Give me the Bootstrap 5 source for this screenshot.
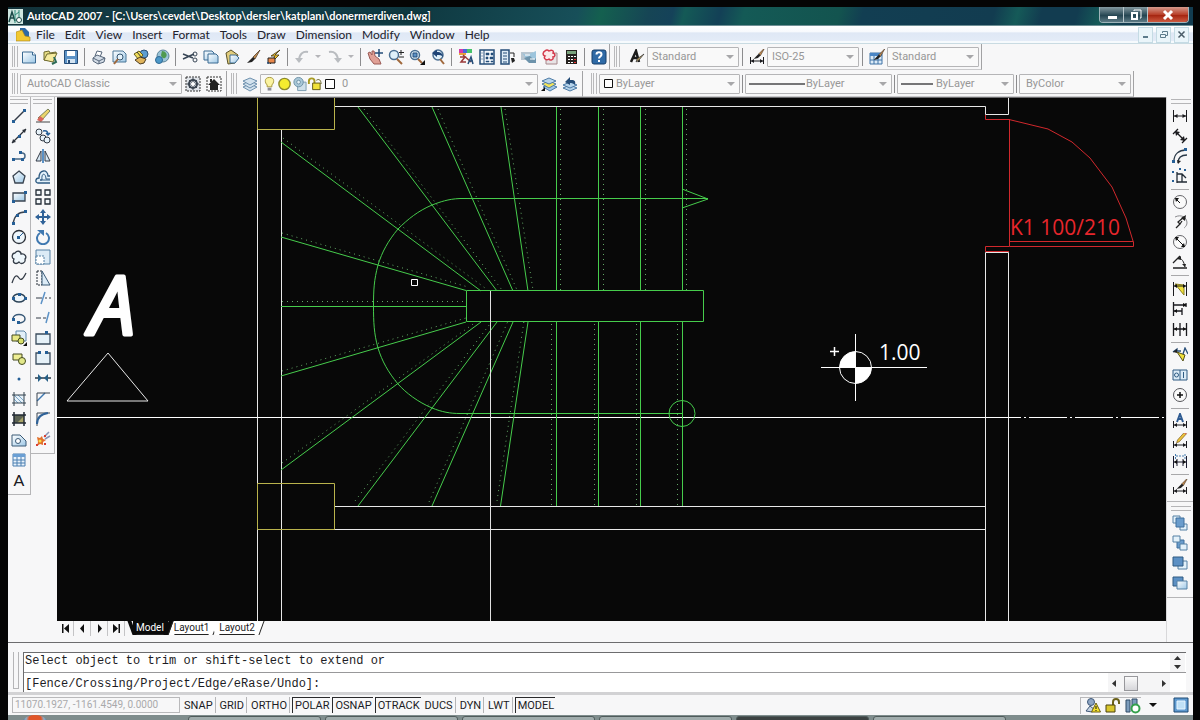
<!DOCTYPE html>
<html lang="en">
<head>
<meta charset="utf-8">
<meta name="viewport" content="width=device-width, initial-scale=1">
<title>AutoCAD 2007 - donermerdiven.dwg</title>
<link href="https://cdn.jsdelivr.net/npm/bootstrap@5.3.0/dist/css/bootstrap.min.css" rel="stylesheet">
<style>
:root{--face:#f7f7f8;--edge:#a2a2a4;--ui:Lato,"Open Sans",sans-serif;--small:Roboto,"Liberation Sans",sans-serif}
body{background:#050505;font-family:var(--ui);font-size:12px;line-height:16px;color:#1c1c24;min-height:100vh;overflow:hidden}
.shell{margin:7px 7px 0 8px;background:var(--face);min-height:calc(100vh - 12px)}
button{padding:0;border:0;background:none;color:inherit}
.titlebar{height:19px;background:linear-gradient(105deg,#123138 0,#164550 18%,#0f3840 34%,#174f59 48%,#14604f 50%,#164555 54%,#154259 56%,#145a56 57%,#134056 60%,#145a56 62%,#13544f 70%,#123e52 72%,#123c50 83%,#155a58 85%,#123c50 87%,#123c50 90%,#155a58 92%,#123c50 94%);color:#fff;border-bottom:1px solid #6f9096}
.titlebar .caption{font-weight:700;font-size:11px;text-shadow:0 0 2px #0008;line-height:18px}
.winbtns{height:16px;border:1px solid #9fb4ba;border-top:0;border-radius:0 0 4px 4px;overflow:hidden}
.winbtns button{width:24px;background:linear-gradient(#8499a0,#31505c 50%,#1f3f4c 51%,#5d7b85);border-right:1px solid #b8c7cc}
.winbtns .quit{width:40px;border:0;background:linear-gradient(#d69a8c,#b8402a 50%,#a1200c 51%,#cc5a40)}
.menubar{height:18px;background:linear-gradient(#fff 0,#f6f9fd 35%,#dfe8f5 40%,#e3ebf7 85%,#f6fafd 90%);border-bottom:1px solid #c9dbe2}
.menubar a{color:#22222c;text-decoration:none;padding:0 5px;line-height:17px}
.menubar .doc button{width:15px;height:16px;background:#eaf5fa;border:1px solid #c5dbe4;margin-left:3px}
.toolrow{height:27px;padding-left:2px}
.toolrow + .toolrow{height:26px}
.strip{height:26px;padding-right:2px;border-right:1px solid var(--edge);border-bottom:1px solid #c9c9cb}
.grip{width:6px;height:21px;border:1px solid #b9b9bb;border-width:0 1px;box-shadow:inset -2px 0 0 #f7f7f8,inset -3px 0 0 #b9b9bb;margin:0 2px 0 2px}
.tool{width:21px;height:20px;display:flex;align-items:center;justify-content:center;flex:none}
.tool svg{width:16px;height:16px;display:block}
.tool:hover{background:#dce8f4}
.more{width:12px;height:20px;display:flex;align-items:center;justify-content:center}
.vsep{width:7px;height:18px;flex:none;background:linear-gradient(#8c8c8e,#8c8c8e) center/1px 100% no-repeat}
.props .vsep{width:5px}
.pick{position:relative;flex:none}
.pick select{width:100%;height:20px;appearance:none;border:1px solid #b5b5b7;border-radius:1px;background:#f9f9f9;color:#979797;font-family:var(--small);font-size:11px;line-height:16px;padding:0 18px 0 4px;opacity:1;display:block}
.pick::after{content:"";position:absolute;right:5px;top:8px;border:4px solid transparent;border-top:4px solid #a7a7a9;border-bottom:0}
.pick .mark-line{position:absolute;left:4px;top:9px;height:2px;background:#757577}
.pick .swatches{position:absolute;left:2px;top:2px}
.pick .swatches svg{width:15px;height:16px}
.w-style{width:92px}.w-space{width:162px}.w-layer{width:278px}.w-color{width:141px}.w-ltype{width:147px}.w-weight{width:117px}.w-plot{width:112px}
.pick .pad-sw{padding-left:16px}.pick .pad-layer{padding-left:81px}.pick .pad-lt{padding-left:60px}.pick .pad-lw{padding-left:38px}.pick .pad-a{padding-left:6px}
.docks{width:49px}
.vbar{padding-top:2px;border-right:1px solid #b5b5b7;border-bottom:1px solid #b5b5b7}
.vbar.draws{width:23px}.vbar.edits{width:24px}
.vbar .stack{display:flex;flex-direction:column;justify-content:space-between;align-items:center;margin-bottom:4px}
.draws .stack{height:384px}.edits .stack{height:343px}
.vgrip{height:5px;margin:0 2px 2px;border:1px solid #b5b5b7;border-width:1px 0;box-shadow:inset 0 -1px 0 #f7f7f8}
.sidebar{width:27px;border-left:1px solid #d8d8da}
.sidebar .tool{width:26px}
.sidebar .hsep{height:6px;background:linear-gradient(#a8a8aa,#a8a8aa) center/18px 1px no-repeat}
.sidebar .wide-sep{height:7px}
.model{background:#080808;border-top:1px solid #6c6c6e;min-height:200px}
.model svg{display:block;width:100%;height:100%}
.model text{font-family:"Open Sans","Noto Sans",sans-serif}
.sheets{height:21px}
.sheets .navb{width:17px;height:15px;border-right:1px solid #c4c4c6;display:flex;align-items:center;justify-content:center}
.sheets .sheet{font-family:var(--small);font-size:10px;line-height:14px;height:14px;padding:0 4px 0 3px;background:#fff;border-bottom:1px solid #222;position:relative;margin-right:3px}
.sheets .sheet::before{content:"";position:absolute;left:-3px;top:0;width:4px;height:14px;background:inherit;transform:skewX(20deg)}
.sheets .sheet::after{content:"";position:absolute;right:-3px;top:0;width:5px;height:14px;border-right:1px solid #222;background:inherit;transform:skewX(-20deg)}
.sheets .sheet.active{background:#0a0a0a;color:#fff;z-index:1}
.console{border-top:1px solid #6c6c6e;padding:9px 7px 0 5px;height:50px}
.console .box{background:#fff;border-top:1px solid #6c6c6e;border-left:1px solid #6c6c6e;font-family:"Liberation Mono",monospace;font-size:12px}
.console .history{height:20px;padding:0 1px;border-bottom:1px solid #98989a;line-height:16px}
.console input{border:0;outline:0;background:transparent;font:inherit;padding:2px 0 0 1px;height:20px;color:#1c1c24}
.console .cgrip{width:6px;height:37px;border:1px solid #b5b5b7;border-width:0 1px 1px;margin-right:4px}
.scrollv{width:15px;background:#f5f5f6}
.scrollh{width:62px;background:#f5f5f6}
.thumb{width:14px;height:15px;border:1px solid #97979b;background:linear-gradient(#fafafa,#d6d6da)}
.status{height:23px;border-top:3px solid #d2d2d4;font-family:var(--small);font-size:11px;padding-left:4px}
.status .coords{width:168px;height:16px;border:1px solid #b9b9bb;color:#a9a9ab;padding:0 2px;background:#f7f7f8;font:inherit;font-size:10px}
.status .mode{height:16px;line-height:15px;padding:0 2px;border-right:1px solid #b5b5b7;margin-left:2px}
.status .mode.on{border:1px solid #2a2a2c;border-width:1px 0 0 1px;padding-right:1px}
.tray{border:1px solid #b9b9bb;border-width:1px 0 0 1px}
.tray svg,.status .clean svg{width:16px;height:16px;display:block}
.taskbar{height:5px;background:#7f8d8d;overflow:hidden;margin:0 7px 0 8px;padding-left:180px;position:relative}
.taskbar .task{width:133px;height:12px;background:#a0acac;border:1px solid #4f5b5b;border-radius:3px;margin-top:1px;flex:none}
.taskbar .task.now{background:#3c4242}
.orb{position:absolute;left:10px;top:0;width:34px;height:34px;border-radius:50%;background:radial-gradient(circle at 50% 14%,#e0562a 0 6px,#8fb0cc 9px,#2b4b66 15px)}
</style>
</head>
<body class="d-flex flex-column">

<svg width="0" height="0" class="position-absolute" aria-hidden="true">
<defs>
<linearGradient id="gb" x1="0" y1="0" x2="1" y2="1"><stop offset="0" stop-color="#fff"/><stop offset="1" stop-color="#9cc7e6"/></linearGradient>
<g id="dim" fill="none" stroke="#1a1a1e"><path d="M1.500 2v12M14.500 2v12M2 8h12"/><path d="M2 8l3.500-2v4zM14 8l-3.500-2v4z" fill="#1a1a1e" stroke="none"/></g>
<g id="dimlow" fill="none" stroke="#1a1a1e"><path d="M1.500 8v7M14.500 8v7M2 12h12"/><path d="M2 12l3-2v4zM14 12l-3-2v4z" fill="#1a1a1e" stroke="none"/></g>
<g id="brush"><path d="M15 1L8 8l2 2z" fill="#c08a50" stroke="#44301c" stroke-width=".7"/><path d="M8 8l2 2-3 3-5 1 3-3z" fill="#222"/></g>
<g id="pencil"><path d="M13 1l2 2-8 9-3 1 1-3z" fill="#ebc23c" stroke="#705014" stroke-width=".7"/><path d="M12 2l2 2 1-1-2-2z" fill="#d66b5a"/></g>
<g id="bolt"><path d="M14 1L5 7h4L4 15l9-9H9z" fill="#f5c62e" stroke="#3a2f10" stroke-width=".8"/></g>
<g id="node" fill="#265f96"><rect width="3" height="3"/></g>
</defs>
<symbol id="i-new" viewBox="0 0 16 16"><path d="M1.500 3h10l3 3v8h-13z" fill="url(#gb)" stroke="#3b6a92"/><path d="M11.500 3v3h3" fill="#fff" stroke="#3b6a92"/></symbol>
<symbol id="i-open" viewBox="0 0 16 16"><path d="M2 3l5-1 1 2 6-1-3 9-9-1z" fill="#e8de86" stroke="#6f6a2e"/><path d="M2 11l3-6 10-1-4 9z" fill="#f6eb9e" stroke="#6f6a2e"/><path d="M10 15l4-2-2-5" fill="none" stroke="#2d6a55" stroke-width="2"/></symbol>
<symbol id="i-save" viewBox="0 0 16 16"><path d="M1.500 1.500h13v13h-13z" fill="#5c92c6" stroke="#264d78"/><path d="M4 2h8v5H4z" fill="#fff"/><path d="M4 10h8v4H4z" fill="#d4e4f2"/><path d="M5 11h2v3H5z" fill="#264d78"/></symbol>
<symbol id="i-plot" viewBox="0 0 16 16"><path d="M4 7l2-5 5 1-2 5z" fill="#fff" stroke="#56667a"/><path d="M2 9l4-3 8 3-1 4-6 2-5-3z" fill="#d3dce6" stroke="#56667a"/><path d="M2 9l6 3 6-3M8 12v3" fill="none" stroke="#56667a"/></symbol>
<symbol id="i-preview" viewBox="0 0 16 16"><path d="M1 2h10l3 3v8H1z" fill="url(#gb)" stroke="#4b7697"/><circle cx="8" cy="8" r="3" fill="#e6f3fb" stroke="#33536f"/><path d="M6 10l-4 5" stroke="#a0683c" stroke-width="2"/></symbol>
<symbol id="i-publish" viewBox="0 0 16 16"><circle cx="11" cy="5" r="4" fill="#5d9dd0" stroke="#2b5076"/><path d="M1 5l5-3 4 4-4 5z" fill="#f0dc58" stroke="#665b1c"/><path d="M2 11l5-3 6 2-2 4-4 1z" fill="#e0b45c" stroke="#4c3c20"/><path d="M4 3l5 6" stroke="#333"/></symbol>
<symbol id="i-web" viewBox="0 0 16 16"><circle cx="9" cy="7" r="6" fill="#9cc4d8" stroke="#5c8498"/><path d="M8 2c3 0 6 3 4 6s-5 0-5-2z" fill="#4f9a50"/><circle cx="5" cy="11" r="3.500" fill="#4d98c8" stroke="#2f6a94"/></symbol>
<symbol id="i-cut" viewBox="0 0 16 16"><path d="M1 5l10 4M1 10l11-5" stroke="#384656" stroke-width="1.500" fill="none"/><circle cx="13" cy="11" r="2" fill="none" stroke="#384656"/><circle cx="13" cy="5" r="2" fill="none" stroke="#384656"/></symbol>
<symbol id="i-copy" viewBox="0 0 16 16"><path d="M1 2h8l2 2v7H1z" fill="url(#gb)" stroke="#3b6a92"/><path d="M5 5h8l2 2v7H5z" fill="url(#gb)" stroke="#3b6a92"/></symbol>
<symbol id="i-paste" viewBox="0 0 16 16"><path d="M2 4l5-3 7 5-3 8-7 1z" fill="#e1cc7c" stroke="#5b5228"/><path d="M6 6h6l3 3-4 5H6z" fill="url(#gb)" stroke="#3b6a92"/></symbol>
<symbol id="i-brush" viewBox="0 0 16 16"><use href="#brush"/></symbol>
<symbol id="i-block" viewBox="0 0 16 16"><use href="#bolt"/><path d="M2 9h7v5H2z" fill="#e9884c" stroke="#222"/><circle cx="2" cy="14" r="1" fill="#264d78"/></symbol>
<symbol id="i-undo" viewBox="0 0 16 16"><path d="M14 3C9 2 5 5 5 12" fill="none" stroke="#b9bcc0" stroke-width="2"/><path d="M1 9l4 5 4-5z" fill="#b9bcc0"/></symbol>
<symbol id="i-redo" viewBox="0 0 16 16"><path d="M2 3c5-1 9 2 9 9" fill="none" stroke="#b9bcc0" stroke-width="2"/><path d="M15 9l-4 5-4-5z" fill="#b9bcc0"/></symbol>
<symbol id="i-pan" viewBox="0 0 16 16"><path d="M1 4l2-1 2 3 0-4 2 0 1 5 4 3 2 5H7L3 10z" fill="#e0a096" stroke="#9a5a55"/><path d="M12 0v8M8 4h8" stroke="#264d78" stroke-width="1.500"/></symbol>
<symbol id="i-zoom" viewBox="0 0 16 16"><circle cx="6" cy="6" r="4.500" fill="#dff0fa" stroke="#4b6f92" stroke-width="1.500"/><path d="M9 10l5 5" stroke="#a0683c" stroke-width="2"/><path d="M13 1v5M11 3.500h5M11 8h5" stroke="#222"/></symbol>
<symbol id="i-zoomw" viewBox="0 0 16 16"><circle cx="6" cy="6" r="4.500" fill="#dff0fa" stroke="#4b6f92" stroke-width="1.500"/><path d="M4 4h4v4H4z" fill="#5c92c6" stroke="#264d78"/><path d="M9 10l4 4" stroke="#a0683c" stroke-width="2"/><path d="M16 11v5h-5z" fill="#111"/></symbol>
<symbol id="i-zoomp" viewBox="0 0 16 16"><circle cx="8" cy="6" r="5" fill="#dff0fa" stroke="#4b6f92" stroke-width="1.500"/><path d="M2 4l5-3v2c4 0 6 2 6 5-2-2-3-2-6-2v2z" fill="#1f4476"/><path d="M10 10l4 5" stroke="#a0683c" stroke-width="2"/></symbol>
<symbol id="i-props" viewBox="0 0 16 16"><path d="M1 0h4v4H1z" fill="#d638a8"/><path d="M5 0h4v4H5z" fill="#4a66d8"/><path d="M9 0h5v4H9z" fill="#47c46a"/><path d="M1 4h7v2H1z" fill="#e8a23a"/><path d="M2 8h5l-4 5 5 0M5 6l8 7" stroke="#9a3a3a" stroke-width="1.500" fill="none"/><path d="M10 15l3-7 2 7M11 12h4" stroke="#264d78" fill="none" stroke-width="1.500"/></symbol>
<symbol id="i-dc" viewBox="0 0 16 16"><path d="M1 1h14v14H1z" fill="#f4f8fb" stroke="#264d78" stroke-width="1.500"/><path d="M5 1v14" stroke="#264d78"/><path d="M7 4h3v2H7zM12 4h2v2h-2zM7 8h2v2H7zM11 8h3v2h-3zM7 12h3v1H7zM12 12h2v1h-2zM2 4h2M2 7h2M2 10h2" fill="#264d78" stroke="#264d78" stroke-width=".5"/></symbol>
<symbol id="i-palette" viewBox="0 0 16 16"><path d="M1 1h8v14H1z" fill="#dcebf6" stroke="#264d78" stroke-width="1.500"/><path d="M3 4h4M3 7h4M3 10h4M3 13h4" stroke="#264d78"/><path d="M10 4h4v4" stroke="#222" fill="none"/><path d="M11 9l3 0 1 3-3 2z" fill="#222"/></symbol>
<symbol id="i-sheet" viewBox="0 0 16 16"><path d="M0 3h12v8H0z" fill="#b8c5cf"/><path d="M1 4l5 2 9-4v11l-6 1z" fill="#9cc4dc"/><path d="M3 9l6-2 4 4 2-2v5H8z" fill="#6d93ab"/><path d="M4 6h5M9 10h5" stroke="#fff"/></symbol>
<symbol id="i-markup" viewBox="0 0 16 16"><path d="M4 4h11v11H4z" fill="#e8e4e6" stroke="#a8888c"/><path d="M3 2c2-2 4 0 4 0 3-2 5 0 4 2 3 1 2 4 0 4 1 3-3 4-4 2-3 2-6-1-4-3-3-1-2-4 0-5z" fill="#fbe9ea" stroke="#d43a4c" stroke-width="1.500"/></symbol>
<symbol id="i-calc" viewBox="0 0 16 16"><path d="M3 1h11v14H3z" fill="#26221f"/><path d="M4 2h9v3H4z" fill="#7aa37c"/><path d="M5 7h2v1H5zM8 7h2v1H8zM11 7h2v1h-2zM5 10h2v1H5zM8 10h2v1H8zM5 13h2v1H5zM8 13h2v1H8z" fill="#fff"/><path d="M11 10h2v1h-2zM11 13h2v1h-2z" fill="#e33"/></symbol>
<symbol id="i-help" viewBox="0 0 16 16"><rect x="1" y="1" width="14" height="14" rx="2" fill="#2f6aa6" stroke="#173f6a"/><path d="M5.500 5.500c0-3 5-3 5 0 0 2-2.500 2-2.500 4" fill="none" stroke="#fff" stroke-width="2"/><path d="M7 11h2v2H7z" fill="#fff"/></symbol>
<symbol id="i-tstyle" viewBox="0 0 16 16"><path d="M2 13L7 2l3 11M4 9h6" fill="none" stroke="#1b1b1b" stroke-width="2.500"/><path d="M15 5l-5 6-3 2 1-3z" fill="#b59a60" stroke="#333" stroke-width=".7"/></symbol>
<symbol id="i-dstyle" viewBox="0 0 16 16"><use href="#dimlow"/><g transform="translate(3 -2) scale(.85)"><use href="#brush"/></g></symbol>
<symbol id="i-tbl" viewBox="0 0 16 16"><path d="M1 4h12v11H1z" fill="#dcebf8" stroke="#3e72a6"/><path d="M1 4h12v3H1z" fill="#4a86c6"/><path d="M1 11h12M5 7v8M9 7v8" stroke="#3e72a6"/><g transform="translate(3 -1) scale(.85)"><use href="#brush"/></g></symbol>
<symbol id="i-gear" viewBox="0 0 16 16"><path d="M1 1h14v14H1z" fill="#dfe3e8" stroke="#333" stroke-dasharray="2 1"/><circle cx="8" cy="8" r="4" fill="none" stroke="#3a4450" stroke-width="2"/><path d="M8 2v12M2 8h12M4 4l8 8M12 4l-8 8" stroke="#3a4450"/><circle cx="8" cy="8" r="2" fill="#fff"/></symbol>
<symbol id="i-home" viewBox="0 0 16 16"><path d="M1 1h14v14H1z" fill="none" stroke="#333" stroke-dasharray="2 1"/><path d="M2 9l6-6 6 6h-2v5H4V9z" fill="#222"/><path d="M4 3h2v3H4z" fill="#222"/></symbol>
<symbol id="i-layers" viewBox="0 0 16 16"><g fill="#d3e2ee" stroke="#6d90ad"><path d="M1 11l7-3 7 3-7 4z"/><path d="M1 8l7-3 7 3-7 4z"/><path d="M1 5l7-3 7 3-7 4z"/></g></symbol>
<symbol id="i-laycur" viewBox="0 0 16 16"><g stroke="#4d7ba6"><path d="M2 11l7-3 7 3-7 4z" fill="#9fc6e6"/><path d="M1 8l7-3 7 3-7 4z" fill="#efe25a"/><path d="M1 5l7-3 7 3-7 3z" fill="#b8d5ea"/></g><path d="M0 15l4-4v4z" fill="#111"/></symbol>
<symbol id="i-layprev" viewBox="0 0 16 16"><g stroke="#4d7ba6" fill="#b4d2ea"><path d="M1 12l7-3 7 3-7 3z"/><path d="M1 9l7-3 7 3-7 3z"/></g><path d="M3 6l5-5v3c4 0 6 0 5 5-2-2-2-2-5-2v2z" fill="#264d78"/></symbol>
<symbol id="i-bulb" viewBox="0 0 16 16"><path d="M8 1c6 0 5 6 2.500 8v2h-5V9C3 7 2 1 8 1z" fill="#fbf3a0" stroke="#a39438"/><path d="M6 12h4v3H6z" fill="#8f8f98"/></symbol>
<symbol id="i-sun" viewBox="0 0 16 16"><circle cx="8" cy="8" r="6" fill="#f5ec2e" stroke="#8d8a2c" stroke-width="1.500"/></symbol>
<symbol id="i-vp" viewBox="0 0 16 16"><path d="M6 6h9v9H6z" fill="#cfe0ea" stroke="#7b9cb0"/><circle cx="7" cy="6" r="5" fill="#a9c8d8" stroke="#6d90a6"/><circle cx="7" cy="6" r="2" fill="#e3f0f5" stroke="#6d90a6"/></symbol>
<symbol id="i-lock" viewBox="0 0 16 16"><path d="M2 8V5c0-4 6-4 6 0v3" fill="none" stroke="#a89b22" stroke-width="2"/><path d="M6 7h8v7H6z" fill="#f2e23a" stroke="#5d5614"/><path d="M10 4c3-2 5 0 5 4" fill="none" stroke="#5d5614"/></symbol>
<symbol id="i-line" viewBox="0 0 16 16"><path d="M3 13L13 3" stroke="#333b46" stroke-width="1.500"/><use href="#node" x="1" y="12"/><use href="#node" x="12" y="1"/></symbol>
<symbol id="i-xline" viewBox="0 0 16 16"><path d="M1 15L15 1" stroke="#2b3038" stroke-width="1.300"/><path d="M1 15l1-4 3 3zM15 1l-4 1 3 3z" fill="#2b3038"/><use href="#node" x="7" y="7"/></symbol>
<symbol id="i-pline" viewBox="0 0 16 16"><path d="M2 11h9c4 0 4-6 0-6H9" fill="none" stroke="#4a6884" stroke-width="1.500"/><use href="#node" x="1" y="10"/><use href="#node" x="10" y="10"/><use href="#node" x="8" y="3"/></symbol>
<symbol id="i-poly" viewBox="0 0 16 16"><path d="M8 2l6 5-2 7H4L2 7z" fill="url(#gb)" stroke="#3a4450" stroke-width="1.300"/></symbol>
<symbol id="i-rect" viewBox="0 0 16 16"><path d="M2 4h12v8H2z" fill="url(#gb)" stroke="#3a4450" stroke-width="1.300"/><use href="#node" x="1" y="11"/><use href="#node" x="13" y="2"/></symbol>
<symbol id="i-arc" viewBox="0 0 16 16"><path d="M2 15C3 8 7 3 14 3" fill="none" stroke="#3a4450" stroke-width="1.300"/><use href="#node" x="1" y="13"/><use href="#node" x="5" y="5"/><use href="#node" x="13" y="1"/></symbol>
<symbol id="i-circle" viewBox="0 0 16 16"><circle cx="8" cy="8" r="6.500" fill="#eef6fb" stroke="#2b3038" stroke-width="1.300"/><path d="M8 8l4-4" stroke="#265f96"/><use href="#node" x="6" y="7"/></symbol>
<symbol id="i-cloud" viewBox="0 0 16 16"><path d="M4 3c2-3 6-2 6 1 4-1 6 3 4 5 1 4-4 6-6 3-3 3-7 1-5-3-3-1-2-6 1-6z" fill="#eef6fb" stroke="#333b46" stroke-width="1.300"/></symbol>
<symbol id="i-spline" viewBox="0 0 16 16"><path d="M1 13C4 4 6 5 8 8s4 1 7-5" fill="none" stroke="#333b46" stroke-width="1.300"/></symbol>
<symbol id="i-ellipse" viewBox="0 0 16 16"><ellipse cx="8" cy="8" rx="6" ry="4" fill="#eef6fb" stroke="#2b4256" stroke-width="1.500"/><use href="#node" x="7" y="3"/><use href="#node" x="1" y="7"/><use href="#node" x="13" y="7"/></symbol>
<symbol id="i-earc" viewBox="0 0 16 16"><path d="M2 9c0-6 12-6 12 0 0 3-4 4-6 4" fill="none" stroke="#3a5a78" stroke-width="1.500"/><use href="#node" x="1" y="8"/><use href="#node" x="6" y="11"/></symbol>
<symbol id="i-insert" viewBox="0 0 16 16"><path d="M5 1h8l2 2v8H5z" fill="#e2eff8" stroke="#5d86a6"/><path d="M1 5h8v6H1z" fill="#e8e884" stroke="#444b20"/><circle cx="10" cy="11" r="3" fill="#d8e06c" stroke="#444b20"/><path d="M16 12v4h-4z" fill="#111"/></symbol>
<symbol id="i-mkblock" viewBox="0 0 16 16"><path d="M2 3h9v6H2z" fill="#eeee94" stroke="#444b20"/><circle cx="11" cy="10" r="3.500" fill="#e2e88a" stroke="#444b20"/></symbol>
<symbol id="i-point" viewBox="0 0 16 16"><circle cx="8" cy="8" r="1.500" fill="#265f96"/></symbol>
<symbol id="i-hatch" viewBox="0 0 16 16"><path d="M3 4h10v8H3z" fill="#e6f1f9"/><path d="M3 8l4 4M3 4l8 8M7 4l6 6" stroke="#7ba6c8"/><path d="M3 1v14M13 1v14M1 4h14M1 12h14" stroke="#32424f" fill="none"/></symbol>
<symbol id="i-grad" viewBox="0 0 16 16"><path d="M3 4h10v8H3z" fill="#5b6254"/><path d="M6 12l7-7v7z" fill="#a8a468"/><path d="M3 1v14M13 1v14M1 4h14M1 12h14" stroke="#222a33" fill="none" stroke-width="1.500"/></symbol>
<symbol id="i-region" viewBox="0 0 16 16"><path d="M1 3h8l6 6v5H1z" fill="url(#gb)" stroke="#3b5a76"/><circle cx="7" cy="9" r="2.500" fill="#fff" stroke="#3b5a76"/></symbol>
<symbol id="i-table" viewBox="0 0 16 16"><path d="M2 2h12v12H2z" fill="#e8f2fb" stroke="#4a7eb0"/><path d="M2 2h12v3H2z" fill="#6a9fd4"/><path d="M2 8h12M2 11h12M6 5v9M10 5v9" stroke="#4a7eb0"/></symbol>
<symbol id="i-erase" viewBox="0 0 16 16"><path d="M13 1l2 2-8 9-4-2z" fill="#ead46a" stroke="#5e6b48" stroke-width=".8"/><path d="M5 8l4 3-3 3-4-2z" fill="#d9665c"/><path d="M1 14h14" stroke="#444"/></symbol>
<symbol id="i-cpobj" viewBox="0 0 16 16"><g fill="#e8f3fa" stroke="#333b46"><circle cx="4" cy="4" r="3"/><circle cx="8" cy="10" r="3"/><circle cx="12" cy="12" r="3"/></g><path d="M8 3c4-1 5 1 5 4M11 5l2 2 2-2" fill="none" stroke="#265f96" stroke-width="1.500"/></symbol>
<symbol id="i-mirror" viewBox="0 0 16 16"><path d="M6 3v10H1z" fill="#d8e8f4" stroke="#333b46"/><path d="M10 3v10h5z" fill="#d8e8f4" stroke="#333b46"/><path d="M8 1v14" stroke="#5c92c6" stroke-width="2"/></symbol>
<symbol id="i-offset" viewBox="0 0 16 16"><path d="M15 14H3c-3 0-3-5 1-5C4 0 13 0 13 7h2" fill="#e3f1fa" stroke="#2f5b82" stroke-width="1.300"/><path d="M15 11H5h2c-1-8 4-7 4-1h4" fill="none" stroke="#2f5b82"/></symbol>
<symbol id="i-array" viewBox="0 0 16 16"><g fill="#f4f8fb" stroke="#222b35" stroke-width="1.300"><path d="M1 1h5v5H1zM10 1h5v5h-5zM1 10h5v5H1zM10 10h5v5h-5z"/></g></symbol>
<symbol id="i-move" viewBox="0 0 16 16"><path d="M8 3v10M3 8h10" stroke="#2f6298" stroke-width="2"/><path d="M8 0l3 4H5zM8 16l3-4H5zM0 8l4-3v6zM16 8l-4-3v6z" fill="#2f6298"/></symbol>
<symbol id="i-rotate" viewBox="0 0 16 16"><path d="M5 4a6 6 0 1 0 6 0" fill="none" stroke="#3f78b0" stroke-width="2"/><path d="M2 1h7v6z" fill="#3f78b0"/></symbol>
<symbol id="i-scale" viewBox="0 0 16 16"><path d="M1 1h14v14H1z" fill="#dcebf6" stroke="#5580a4"/><path d="M1 7h8v8H1z" fill="#fff" stroke="#5580a4" stroke-dasharray="2 1"/></symbol>
<symbol id="i-stretch" viewBox="0 0 16 16"><path d="M2 1h5v14H2z" fill="none" stroke="#222b35" stroke-dasharray="2 1"/><path d="M7 1l8 14H7z" fill="#dcebf6" stroke="#3b5a76"/></symbol>
<symbol id="i-trim" viewBox="0 0 16 16"><path d="M1 8h6M10 8h2M14 8h2" stroke="#333b46"/><path d="M6 14l4-12" stroke="#5c92c6" stroke-width="1.500"/></symbol>
<symbol id="i-extend" viewBox="0 0 16 16"><path d="M1 8h5M8 8h3" stroke="#333b46"/><path d="M11 13l3-11" stroke="#5c92c6" stroke-width="1.500"/></symbol>
<symbol id="i-breakpt" viewBox="0 0 16 16"><path d="M1 4h14v10H1z" fill="#e6f1f8" stroke="#3b4c5c" stroke-width="1.300"/><use href="#node" x="10" y="1"/></symbol>
<symbol id="i-break" viewBox="0 0 16 16"><path d="M1 3h14v11H1z" fill="#e6f1f8"/><path d="M5 3H1v11h14V3h-4" fill="none" stroke="#3b4c5c" stroke-width="1.300"/><use href="#node" x="3" y="1"/><use href="#node" x="10" y="1"/></symbol>
<symbol id="i-join" viewBox="0 0 16 16"><path d="M0 8h16" stroke="#2b3a48" stroke-width="1.500"/><path d="M7 8L3 4v8zM9 8l4-4v8z" fill="#265f86"/></symbol>
<symbol id="i-chamfer" viewBox="0 0 16 16"><path d="M2 10l8-8" fill="none" stroke="#3f78b0" stroke-width="1.500"/><path d="M2 15V2h13" fill="none" stroke="#3a4450"/></symbol>
<symbol id="i-fillet" viewBox="0 0 16 16"><path d="M2 15V2h13" fill="none" stroke="#3a4450"/><path d="M2 13C2 7 6 3 13 2" fill="none" stroke="#2f6298" stroke-width="2"/></symbol>
<symbol id="i-explode" viewBox="0 0 16 16"><path d="M2 6l3 1 2-2 1 3 3 1-3 2 0 3-3-1-3 2 1-4z" fill="#e2702c"/><path d="M9 6l5-5M10 8l5-3" stroke="#8a94b4" stroke-width="1.500"/><circle cx="5" cy="10" r="1.500" fill="#f6de44"/><path d="M9 4h2v2H9zM1 13h2v2H1zM9 12h2v2H9z" fill="#d93f35"/></symbol>
<symbol id="i-dim" viewBox="0 0 16 16"><use href="#dim"/></symbol>
<symbol id="i-dimal" viewBox="0 0 16 16"><path d="M1 6l5-5M10 15l5-5M4 4l8 8" fill="none" stroke="#1a1a1e" stroke-width="1.300"/><path d="M3 3l5 1-4 4zM13 13l-5-1 4-4z" fill="#1a1a1e"/></symbol>
<symbol id="i-dimarc" viewBox="0 0 16 16"><path d="M2 13C2 6 7 2 14 2M6 15c0-5 3-8 9-8" fill="none" stroke="#2b3a48" stroke-width="1.300"/><use href="#node" x="0" y="12"/><use href="#node" x="12" y="0"/><path d="M5 12l1 4 3-3z" fill="#222"/></symbol>
<symbol id="i-ord" viewBox="0 0 16 16"><path d="M5 15V4M5 6h5l4 4M5 14h10M10 6v8" fill="none" stroke="#222b35" stroke-width="1.300"/><path d="M0 3h2v2H0zM12 1h2v2h-2zM0 12h2v2H0zM7 0h2v2H7z" fill="#265f96"/></symbol>
<symbol id="i-rad" viewBox="0 0 16 16"><circle cx="8" cy="8" r="6.500" fill="#fafafa" stroke="#66666a"/><path d="M8 9L4 5" stroke="#111"/><path d="M3 4l4 0-3 4z" fill="#111"/></symbol>
<symbol id="i-jog" viewBox="0 0 16 16"><path d="M3 3c6-3 12 0 12 6 0 3-3 5-3 5" fill="none" stroke="#8a8a8e"/><path d="M4 14l4-4-2-2 6-5M8 10l2-3" fill="none" stroke="#222" stroke-width="1.300"/><path d="M14 1l-1 6-4-3z" fill="#222"/></symbol>
<symbol id="i-dia" viewBox="0 0 16 16"><circle cx="8" cy="8" r="6.500" fill="#fafafa" stroke="#66666a"/><path d="M4 4l8 8" stroke="#111"/><path d="M3 3h4L4 7zM13 13H9l3-4z" fill="#111"/></symbol>
<symbol id="i-ang" viewBox="0 0 16 16"><path d="M1 14h14M1 9l7-7" stroke="#222" stroke-width="1.300"/><path d="M6 4c4 0 6 4 7 9" fill="none" stroke="#222"/><path d="M5 5l4-3v4zM13 13l-3-3h4z" fill="#222"/></symbol>
<symbol id="i-qdim" viewBox="0 0 16 16"><path d="M3 3l9 1v10z" fill="#f0e03a" stroke="#8a8020"/><path d="M1.500 1v14M14.500 1v14M2 5h12" fill="none" stroke="#1a1a1e"/><path d="M2 5l3-2v4zM14 5l-3-2v4z" fill="#111"/></symbol>
<symbol id="i-base" viewBox="0 0 16 16"><path d="M1.500 1v14M14 2v4M2 4h12M2 10h8M10 7v7" fill="none" stroke="#1a1a1e" stroke-width="1.300"/><path d="M15 4l-4-2v4zM2 10l3-2v4z" fill="#111"/></symbol>
<symbol id="i-cont" viewBox="0 0 16 16"><path d="M1.500 2v13M8 2v13M14.500 2v13M2 8h12" fill="none" stroke="#1a1a1e" stroke-width="1.300"/><path d="M2 8l3-2v4zM14 8l-3-2v4z" fill="#111"/></symbol>
<symbol id="i-lead" viewBox="0 0 16 16"><path d="M1 5l4-3v2h4M11 7l2-6 3 6" fill="none" stroke="#264d78" stroke-width="1.300"/><path d="M1 5l4-3v4z" fill="#222"/><path d="M5 5l8 3-2 6z" fill="#f0e03a" stroke="#55501a"/></symbol>
<symbol id="i-tol" viewBox="0 0 16 16"><path d="M1 3h14v10H1z" fill="#dcebf6" stroke="#2f5b82"/><path d="M8 3v10M11.500 5v6" stroke="#2f5b82"/><circle cx="4.500" cy="8" r="2" fill="none" stroke="#2f5b82"/></symbol>
<symbol id="i-cen" viewBox="0 0 16 16"><circle cx="8" cy="8" r="6.500" fill="#fafafa" stroke="#55555a"/><path d="M8 5v6M5 8h6" stroke="#111" stroke-width="1.500"/></symbol>
<symbol id="i-dimed" viewBox="0 0 16 16"><use href="#dimlow"/><path d="M5 9l3-8 3 8M6 6h4" fill="none" stroke="#2f5b92" stroke-width="2"/></symbol>
<symbol id="i-dimte" viewBox="0 0 16 16"><use href="#dimlow"/><g transform="translate(1 -2) scale(.9)"><use href="#pencil"/></g></symbol>
<symbol id="i-dimup" viewBox="0 0 16 16"><path d="M3.500 1v6M13 1v6M4 3h9" fill="none" stroke="#4a7eb0" stroke-dasharray="2 1"/><path d="M1.500 3v12M14.500 3v12M2 9h12M5 6v7M11 6v7" fill="none" stroke="#1a1a2e"/><path d="M2 9l3-2v4zM14 9l-3-2v4z" fill="#111"/></symbol>
<symbol id="i-ord1" viewBox="0 0 16 16"><path d="M1 1h7v7H1zM8 9h7v6H8z" fill="#e3f1fa" stroke="#5580a4"/><path d="M4 3h8v9H4z" fill="#6a9ccc" stroke="#3f6f9c"/></symbol>
<symbol id="i-ord2" viewBox="0 0 16 16"><path d="M5 5h7v8H5z" fill="#6a9ccc" stroke="#3f6f9c"/><path d="M1 1h7v6H1zM8 9h7v6H8z" fill="#e3f1fa" stroke="#5580a4"/></symbol>
<symbol id="i-ord3" viewBox="0 0 16 16"><path d="M6 6h9v8H6z" fill="#e3f1fa" stroke="#5580a4"/><path d="M1 2h10v9H1z" fill="#5c90c4" stroke="#2f5b82"/></symbol>
<symbol id="i-ord4" viewBox="0 0 16 16"><path d="M1 2h10v9H1z" fill="#5c90c4" stroke="#2f5b82"/><path d="M5 6h10v8H5z" fill="url(#gb)" stroke="#5580a4"/></symbol>
</svg>

<div class="shell d-flex flex-column flex-grow-1">
  <header class="titlebar d-flex align-items-center">
    <svg width="15" height="15" viewBox="0 0 15 15" aria-hidden="true"><path d="M0 0h15v15H0z" fill="#cfe6e0"/><path d="M1 13L4 3l3 9M2 9h4" fill="none" stroke="#1b4a48" stroke-width="1.500"/><path d="M7 1v13M11 1v8M7 6l4-3" stroke="#2f8a78"/><circle cx="11" cy="11" r="2.500" fill="#fff" stroke="#1b4a48"/></svg>
    <span class="caption ms-1 flex-grow-1">AutoCAD 2007 - [C:\Users\cevdet\Desktop\dersler\katplanı\donermerdiven.dwg]</span>
    <div class="winbtns d-flex me-1 align-self-start">
      <button type="button" aria-label="Minimize"><svg width="12" height="12" viewBox="0 0 12 12" class="d-block mx-auto"><path d="M2 7h9v3H2z" fill="#fff"/></svg></button>
      <button type="button" aria-label="Restore"><svg width="12" height="12" viewBox="0 0 12 12" class="d-block mx-auto"><path d="M4 2V1h7v8h-1" fill="none" stroke="#fff"/><path d="M1 3h7v8H1zM3 5v4h3V5z" fill="#fff" fill-rule="evenodd"/></svg></button>
      <button type="button" class="quit" aria-label="Close"><svg width="12" height="12" viewBox="0 0 12 12" class="d-block mx-auto"><path d="M2 2l8 8M10 2l-8 8" stroke="#fff" stroke-width="3"/></svg></button>
    </div>
  </header>

  <nav class="menubar d-flex align-items-center" aria-label="Menu bar">
    <svg width="15" height="15" viewBox="0 0 15 15" class="ms-2" aria-hidden="true"><path d="M4 1h5l4 4v6H4z" fill="#2d69a4"/><path d="M0 5l6-2 3 6 5 1v4H0z" fill="#f1c832" stroke="#a67f18" stroke-width=".6"/></svg>
    <div class="d-flex flex-grow-1">
      <a href="#">File</a><a href="#">Edit</a><a href="#">View</a><a href="#">Insert</a><a href="#">Format</a><a href="#">Tools</a><a href="#">Draw</a><a href="#">Dimension</a><a href="#">Modify</a><a href="#">Window</a><a href="#">Help</a>
    </div>
    <div class="doc d-flex me-1">
      <button type="button" aria-label="Minimize drawing"><svg width="9" height="9" viewBox="0 0 9 9" class="d-block mx-auto"><path d="M2 6h5v2H2z" fill="#5d7c8c"/></svg></button>
      <button type="button" aria-label="Restore drawing"><svg width="9" height="9" viewBox="0 0 9 9" class="d-block mx-auto"><path d="M3.500 3V1.500h5v4H7M1.500 4.500h5v3h-5z" fill="none" stroke="#5d7c8c"/></svg></button>
      <button type="button" aria-label="Close drawing"><svg width="9" height="9" viewBox="0 0 9 9" class="d-block mx-auto"><path d="M1.500 1.500l6 6M7.500 1.500l-6 6" stroke="#4a5c68" stroke-width="1.500"/></svg></button>
    </div>
  </nav>

  <div class="toolrow d-flex">
    <div class="strip d-flex align-items-center pe-0" role="toolbar" aria-label="Standard">
      <span class="grip me-0"></span>
      <button class="tool" aria-label="New"><svg><use href="#i-new"/></svg></button><button class="tool" aria-label="Open"><svg><use href="#i-open"/></svg></button><button class="tool" aria-label="Save"><svg><use href="#i-save"/></svg></button>
      <span class="vsep"></span>
      <button class="tool" aria-label="Plot"><svg><use href="#i-plot"/></svg></button><button class="tool" aria-label="Plot preview"><svg><use href="#i-preview"/></svg></button><button class="tool" aria-label="Publish"><svg><use href="#i-publish"/></svg></button><button class="tool" aria-label="3D DWF"><svg><use href="#i-web"/></svg></button>
      <span class="vsep"></span>
      <button class="tool" aria-label="Cut"><svg><use href="#i-cut"/></svg></button><button class="tool" aria-label="Copy"><svg><use href="#i-copy"/></svg></button><button class="tool" aria-label="Paste"><svg><use href="#i-paste"/></svg></button><button class="tool" aria-label="Match properties"><svg><use href="#i-brush"/></svg></button><button class="tool" aria-label="Block editor"><svg><use href="#i-block"/></svg></button>
      <span class="vsep"></span>
      <button class="tool" aria-label="Undo"><svg><use href="#i-undo"/></svg></button><button class="more" aria-label="Undo list"><svg width="6" height="3" viewBox="0 0 6 3"><path d="M0 0h6L3 3z" fill="#b4b4b8"/></svg></button><button class="tool" aria-label="Redo"><svg><use href="#i-redo"/></svg></button><button class="more" aria-label="Redo list"><svg width="6" height="3" viewBox="0 0 6 3"><path d="M0 0h6L3 3z" fill="#b4b4b8"/></svg></button>
      <span class="vsep"></span>
      <button class="tool" aria-label="Pan"><svg><use href="#i-pan"/></svg></button><button class="tool" aria-label="Zoom"><svg><use href="#i-zoom"/></svg></button><button class="tool" aria-label="Zoom window"><svg><use href="#i-zoomw"/></svg></button><button class="tool" aria-label="Zoom previous"><svg><use href="#i-zoomp"/></svg></button>
      <span class="vsep"></span>
      <button class="tool" aria-label="Properties"><svg><use href="#i-props"/></svg></button><button class="tool" aria-label="DesignCenter"><svg><use href="#i-dc"/></svg></button><button class="tool" aria-label="Tool palettes"><svg><use href="#i-palette"/></svg></button><button class="tool" aria-label="Sheet set"><svg><use href="#i-sheet"/></svg></button><button class="tool" aria-label="Markup"><svg><use href="#i-markup"/></svg></button><button class="tool" aria-label="QuickCalc"><svg><use href="#i-calc"/></svg></button>
      <span class="vsep"></span>
      <button class="tool" aria-label="Help"><svg><use href="#i-help"/></svg></button>
    </div>
    <div class="strip d-flex align-items-center ps-1" role="toolbar" aria-label="Styles">
      <span class="grip ms-0"></span>
      <button class="tool ms-1" aria-label="Text style"><svg><use href="#i-tstyle"/></svg></button>
      <span class="pick w-style"><select aria-label="Text style name"><option>Standard</option></select></span>
      <span class="vsep"></span>
      <button class="tool" aria-label="Dimension style"><svg><use href="#i-dstyle"/></svg></button>
      <span class="pick w-style"><select aria-label="Dimension style name"><option>ISO-25</option></select></span>
      <span class="vsep"></span>
      <button class="tool" aria-label="Table style"><svg><use href="#i-tbl"/></svg></button>
      <span class="pick w-style"><select aria-label="Table style name"><option>Standard</option></select></span>
    </div>
  </div>

  <div class="toolrow d-flex">
    <div class="strip d-flex align-items-center" role="toolbar" aria-label="Workspaces">
      <span class="grip"></span>
      <span class="pick w-space"><select class="pad-a" aria-label="Workspace"><option>AutoCAD Classic</option></select></span>
      <button class="tool" aria-label="Workspace settings"><svg><use href="#i-gear"/></svg></button><button class="tool" aria-label="My workspace"><svg><use href="#i-home"/></svg></button>
    </div>
    <div class="strip d-flex align-items-center ps-1" role="toolbar" aria-label="Layers">
      <span class="grip ms-0"></span>
      <button class="tool" aria-label="Layer properties"><svg><use href="#i-layers"/></svg></button>
      <span class="pick w-layer"><select class="pad-layer" aria-label="Layer"><option>0</option></select><span class="swatches d-flex"><svg><use href="#i-bulb"/></svg><svg><use href="#i-sun"/></svg><svg><use href="#i-vp"/></svg><svg><use href="#i-lock"/></svg><svg viewBox="0 0 15 16"><path d="M3.500 3.500h9v9h-9z" fill="#fff" stroke="#111"/></svg></span></span>
      <button class="tool" aria-label="Make layer current"><svg><use href="#i-laycur"/></svg></button><button class="tool" aria-label="Layer previous"><svg><use href="#i-layprev"/></svg></button>
    </div>
    <div class="strip props d-flex align-items-center ps-1" role="toolbar" aria-label="Properties">
      <span class="grip ms-1"></span>
      <span class="pick w-color"><select class="pad-sw" aria-label="Color"><option>ByLayer</option></select><span class="swatches d-flex"><svg viewBox="0 0 15 16"><path d="M3.500 3.500h8v8h-8z" fill="#fff" stroke="#111"/></svg></span></span>
      <span class="vsep"></span>
      <span class="pick w-ltype"><select class="pad-lt" aria-label="Linetype"><option>ByLayer</option></select><span class="mark-line" style="width:56px"></span></span>
      <span class="vsep"></span>
      <span class="pick w-weight"><select class="pad-lw" aria-label="Lineweight"><option>ByLayer</option></select><span class="mark-line" style="width:32px"></span></span>
      <span class="vsep"></span>
      <span class="pick w-plot"><select class="pad-a" aria-label="Plot style"><option>ByColor</option></select></span>
    </div>
  </div>

  <div class="d-flex flex-grow-1">
    <aside class="docks d-flex align-items-start flex-shrink-0">
      <div class="vbar draws" role="toolbar" aria-label="Draw">
        <div class="vgrip"></div>
        <div class="stack">
          <button class="tool" aria-label="Line"><svg><use href="#i-line"/></svg></button><button class="tool" aria-label="Construction line"><svg><use href="#i-xline"/></svg></button><button class="tool" aria-label="Polyline"><svg><use href="#i-pline"/></svg></button><button class="tool" aria-label="Polygon"><svg><use href="#i-poly"/></svg></button><button class="tool" aria-label="Rectangle"><svg><use href="#i-rect"/></svg></button><button class="tool" aria-label="Arc"><svg><use href="#i-arc"/></svg></button><button class="tool" aria-label="Circle"><svg><use href="#i-circle"/></svg></button><button class="tool" aria-label="Revision cloud"><svg><use href="#i-cloud"/></svg></button><button class="tool" aria-label="Spline"><svg><use href="#i-spline"/></svg></button><button class="tool" aria-label="Ellipse"><svg><use href="#i-ellipse"/></svg></button><button class="tool" aria-label="Ellipse arc"><svg><use href="#i-earc"/></svg></button><button class="tool" aria-label="Insert block"><svg><use href="#i-insert"/></svg></button><button class="tool" aria-label="Make block"><svg><use href="#i-mkblock"/></svg></button><button class="tool" aria-label="Point"><svg><use href="#i-point"/></svg></button><button class="tool" aria-label="Hatch"><svg><use href="#i-hatch"/></svg></button><button class="tool" aria-label="Gradient"><svg><use href="#i-grad"/></svg></button><button class="tool" aria-label="Region"><svg><use href="#i-region"/></svg></button><button class="tool" aria-label="Table"><svg><use href="#i-table"/></svg></button><button class="tool fs-6" aria-label="Multiline text">A</button>
        </div>
      </div>
      <div class="vbar edits" role="toolbar" aria-label="Modify">
        <div class="vgrip"></div>
        <div class="stack">
          <button class="tool" aria-label="Erase"><svg><use href="#i-erase"/></svg></button><button class="tool" aria-label="Copy object"><svg><use href="#i-cpobj"/></svg></button><button class="tool" aria-label="Mirror"><svg><use href="#i-mirror"/></svg></button><button class="tool" aria-label="Offset"><svg><use href="#i-offset"/></svg></button><button class="tool" aria-label="Array"><svg><use href="#i-array"/></svg></button><button class="tool" aria-label="Move"><svg><use href="#i-move"/></svg></button><button class="tool" aria-label="Rotate"><svg><use href="#i-rotate"/></svg></button><button class="tool" aria-label="Scale"><svg><use href="#i-scale"/></svg></button><button class="tool" aria-label="Stretch"><svg><use href="#i-stretch"/></svg></button><button class="tool" aria-label="Trim"><svg><use href="#i-trim"/></svg></button><button class="tool" aria-label="Extend"><svg><use href="#i-extend"/></svg></button><button class="tool" aria-label="Break at point"><svg><use href="#i-breakpt"/></svg></button><button class="tool" aria-label="Break"><svg><use href="#i-break"/></svg></button><button class="tool" aria-label="Join"><svg><use href="#i-join"/></svg></button><button class="tool" aria-label="Chamfer"><svg><use href="#i-chamfer"/></svg></button><button class="tool" aria-label="Fillet"><svg><use href="#i-fillet"/></svg></button><button class="tool" aria-label="Explode"><svg><use href="#i-explode"/></svg></button>
        </div>
      </div>
    </aside>

    <main class="d-flex flex-column flex-grow-1">
      <div class="model flex-grow-1 d-flex">
        <svg viewBox="57 98 1109 523" preserveAspectRatio="xMidYMid slice" role="img" aria-label="Stair plan drawing" fill="none" stroke-width="1">
          <g stroke="#e8e8e8">
            <path d="M257.500 98V621M281.500 129V621M335 106.500H985.500V114.500H1008.500V98M335 506.500H985M257 529.500H985M985.500 621V252.500H1008.500V621"/>
            <path d="M108 353L148 401H67Z"/>
            <path d="M57 417.500H983" stroke="#fff"/><path d="M983 417.500H1166" stroke="#fff" stroke-dasharray="38 3 2 3"/>
          </g>
          <g stroke="#b9b34c"><path d="M257.500 98V129.500H334.500V98M257.500 483.500H334.500V529.500H257.500Z"/></g>
          <g stroke="#46cc4c">
            <path d="M556.500 107V291M598.500 107V291M640.500 107V291M682.500 107V291M556.500 322V506M598.500 322V506M640.500 322V506M682.500 322V506"/>
            <path d="M281 142L481 291M281 237L466 290.500M281 306.500H466M358 107L497 291M432 107L513 291M501 107L528 291M281 376L466 322M281 470L481 322M358 506L497 322M432 506L513 322M500.500 506L528 322"/>
            <path d="M466.500 290.500H703.500V321.500H466.500Z"/>
            <path d="M682 189L708 199L682 208M708 198.500H460C448 199 440 202 432 205C418 211 408 219 398 229C388 241 382 252 378 265C374 280 373.500 290 373.500 306C373.500 322 374 334 378 348C382 361 388 372 398 384C406 393 418 402 432 408C442 412 450 413.500 460 413.500H682"/>
            <circle cx="682" cy="413.500" r="13"/>
          </g>
          <g stroke="#62a866" stroke-dasharray="1 4">
            <path d="M560.500 109V291M603.500 109V291M645.500 109V291M686.500 109V291M551.500 324V506M594.500 324V506M636.500 324V506M677.500 324V506"/>
            <path d="M283 138L485 288M282 233L468 287M282 301.500H466M364 109L502 290M438 109L517 290M505 109L533 290M282 371L466 318M282 463L480 319M355 501L493 320M429 502L508 321M497 501L524 321"/>
          </g>
          <path d="M490.500 291V621" stroke="#e0e0e0"/>
          <path d="M411.500 279.500h6v6h-6z" stroke="#fff"/>
          <g stroke="#d0282c">
            <path d="M985.500 115V119.500H1009.500V246.500H985.500V251.500H1009M1009.500 241.500H1133.500V246.500H1009.500M1009 119.500L1048 129L1072 142L1090 158L1112 187L1126 218L1133 241"/>
          </g>
          <g stroke="#fff">
            <path d="M821 367.500H927M855.500 334V401"/>
            <circle cx="855.500" cy="367.500" r="16"/>
            <path d="M855.500 367.500V351.500A16 16 0 0 0 839.500 367.500ZM855.500 367.500V383.500A16 16 0 0 0 871.500 367.500Z" fill="#fff" stroke="none"/>
            <path d="M830 351.500h9M834.500 347v9" stroke-width="1.500"/>
          </g>
          <text x="879" y="360" font-size="21" fill="#fff">1.00</text>
          <text x="1010" y="235" font-size="21" fill="#e8262c">K1 100/210</text>
          <text x="90" y="334" font-size="80" font-style="italic" fill="#fff" stroke="#fff" stroke-width="4" stroke-linejoin="round">A</text>
        </svg>
      </div>
      <div class="sheets d-flex align-items-start" role="tablist">
        <button class="navb" aria-label="First"><svg width="9" height="9" viewBox="0 0 9 9"><path d="M1 0h1.500v9H1zM8 0v9L3 4.500z" fill="#111"/></svg></button>
        <button class="navb" aria-label="Previous"><svg width="9" height="9" viewBox="0 0 9 9"><path d="M6 0v9L2 4.500z" fill="#111"/></svg></button>
        <button class="navb" aria-label="Next"><svg width="9" height="9" viewBox="0 0 9 9"><path d="M3 0v9l4-4.500z" fill="#111"/></svg></button>
        <button class="navb me-2" aria-label="Last"><svg width="9" height="9" viewBox="0 0 9 9"><path d="M1 0v9l5-4.500zM6.500 0H8v9H6.500z" fill="#111"/></svg></button>
        <button class="sheet active" role="tab" aria-selected="true">Model</button>
        <button class="sheet" role="tab" aria-selected="false">Layout1</button>
        <button class="sheet" role="tab" aria-selected="false">Layout2</button>
      </div>
    </main>

    <aside class="sidebar flex-shrink-0">
      <div class="vbar border-end-0" role="toolbar" aria-label="Dimension">
        <div class="vgrip ms-1"></div>
        <button class="tool" aria-label="Linear"><svg><use href="#i-dim"/></svg></button><button class="tool" aria-label="Aligned"><svg><use href="#i-dimal"/></svg></button><button class="tool" aria-label="Arc length"><svg><use href="#i-dimarc"/></svg></button><button class="tool" aria-label="Ordinate"><svg><use href="#i-ord"/></svg></button>
        <div class="hsep"></div>
        <button class="tool" aria-label="Radius"><svg><use href="#i-rad"/></svg></button><button class="tool" aria-label="Jogged"><svg><use href="#i-jog"/></svg></button><button class="tool" aria-label="Diameter"><svg><use href="#i-dia"/></svg></button><button class="tool" aria-label="Angular"><svg><use href="#i-ang"/></svg></button>
        <div class="hsep wide-sep"></div>
        <button class="tool" aria-label="Quick dimension"><svg><use href="#i-qdim"/></svg></button><button class="tool" aria-label="Baseline"><svg><use href="#i-base"/></svg></button><button class="tool" aria-label="Continue"><svg><use href="#i-cont"/></svg></button>
        <div class="hsep"></div>
        <button class="tool" aria-label="Quick leader"><svg><use href="#i-lead"/></svg></button><button class="tool" aria-label="Tolerance"><svg><use href="#i-tol"/></svg></button><button class="tool" aria-label="Center mark"><svg><use href="#i-cen"/></svg></button>
        <div class="hsep"></div>
        <button class="tool" aria-label="Dimension edit"><svg><use href="#i-dimed"/></svg></button><button class="tool" aria-label="Dimension text edit"><svg><use href="#i-dimte"/></svg></button><button class="tool" aria-label="Dimension update"><svg><use href="#i-dimup"/></svg></button>
        <div class="hsep"></div>
        <button class="tool mb-1" aria-label="Dimension styles"><svg><use href="#i-dstyle"/></svg></button>
      </div>
      <div class="vbar border-end-0 pt-1" role="toolbar" aria-label="Draw order">
        <div class="vgrip ms-1"></div>
        <button class="tool" aria-label="Bring to front"><svg><use href="#i-ord1"/></svg></button><button class="tool" aria-label="Send to back"><svg><use href="#i-ord2"/></svg></button><button class="tool" aria-label="Bring above object"><svg><use href="#i-ord3"/></svg></button><button class="tool mb-1" aria-label="Send under object"><svg><use href="#i-ord4"/></svg></button>
      </div>
    </aside>
  </div>

  <section class="console d-flex" aria-label="Command line">
    <span class="cgrip"></span>
    <div class="box flex-grow-1">
      <div class="history d-flex">
        <span class="flex-grow-1">Select object to trim or shift-select to extend or</span>
        <span class="scrollv d-flex flex-column justify-content-around align-items-center"><svg width="7" height="4" viewBox="0 0 7 4"><path d="M0 4h7L3.500 0z" fill="#333"/></svg><svg width="7" height="4" viewBox="0 0 7 4"><path d="M0 0h7L3.500 4z" fill="#333"/></svg></span>
      </div>
      <div class="d-flex">
        <input class="flex-grow-1" aria-label="Command" value="[Fence/Crossing/Project/Edge/eRase/Undo]:">
        <span class="scrollh d-flex align-items-center justify-content-between px-1 me-3"><svg width="4" height="7" viewBox="0 0 4 7"><path d="M4 0v7L0 3.500z" fill="#333"/></svg><span class="thumb me-3"></span><svg width="4" height="7" viewBox="0 0 4 7"><path d="M0 0v7l4-3.500z" fill="#333"/></svg></span>
      </div>
    </div>
  </section>

  <footer class="status d-flex align-items-center">
    <input class="coords" aria-label="Coordinates" value="11070.1927, -1161.4549, 0.0000" readonly>
    <button class="mode">SNAP</button><button class="mode">GRID</button><button class="mode">ORTHO</button><button class="mode on">POLAR</button><button class="mode on">OSNAP</button><button class="mode on">OTRACK</button><button class="mode">DUCS</button><button class="mode">DYN</button><button class="mode">LWT</button><button class="mode on">MODEL</button>
    <span class="tray d-flex gap-1 ms-auto ps-1">
      <svg viewBox="0 0 16 16"><circle cx="6" cy="4" r="3.500" fill="#8fa6c4" stroke="#3f5878"/><path d="M1 13l4-5 5 4-3 2z" fill="#c5d2e0" stroke="#3f5878"/><path d="M11 5l4.500 9h-9z" fill="#f6e32c" stroke="#6a5f14"/><path d="M10.500 8h1v3h-1zM10.500 12h1v1h-1z" fill="#111"/></svg>
      <svg viewBox="0 0 16 16"><path d="M8 8V4c0-4 6-4 6 0v2" fill="none" stroke="#6b611a" stroke-width="2"/><path d="M1 7h9v7H1z" fill="#d8c62c" stroke="#4a430f"/></svg>
      <svg viewBox="0 0 16 16"><path d="M1 2h4v12H1zM7 1h5v12H7z" fill="#7c9cbc" stroke="#2f4b66"/><circle cx="10.500" cy="10.500" r="4" fill="#fff" stroke="#35a04c" stroke-width="2"/></svg>
    </span>
    <button class="ms-1 me-2 px-1" aria-label="Tray menu"><svg width="8" height="4" viewBox="0 0 8 4"><path d="M0 0h8L4 4z" fill="#111"/></svg></button>
    <button class="clean mx-1" aria-label="Clean screen"><svg viewBox="0 0 16 16"><path d="M1 1h14v14H1z" fill="#5f9ad0" stroke="#1f4a74"/><path d="M4 4h8v8H4z" fill="#bfe0f6" stroke="#e9f6ff"/></svg></button>
  </footer>
</div>
<div class="taskbar d-flex gap-1"><span class="orb"></span><span class="task"></span><span class="task"></span><span class="task"></span><span class="task"></span><span class="task now"></span><span class="task"></span></div>
<script src="https://cdn.jsdelivr.net/npm/bootstrap@5.3.0/dist/js/bootstrap.bundle.min.js"></script>
</body>
</html>
